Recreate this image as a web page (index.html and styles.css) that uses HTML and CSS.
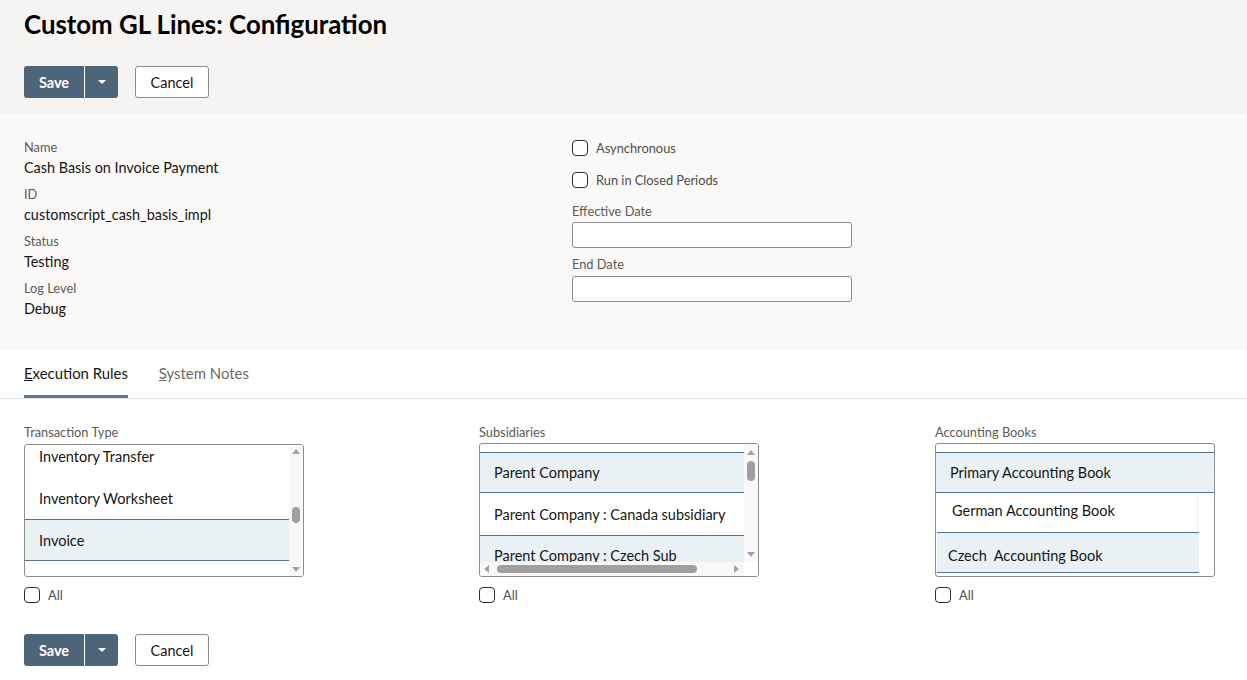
FILE: index.html
```html
<!DOCTYPE html>
<html lang="en">
<head>
    <meta charset="UTF-8">
    <meta name="viewport" content="width=device-width, initial-scale=1.0">
    <title>Custom GL Lines: Configuration</title>
    <link rel="stylesheet" href="styles.css">
</head>
<body>
    <div class="page-header">
        <h1>Custom GL Lines: Configuration</h1>
        <div class="actions">
            <div class="split-button">
                <button class="btn-primary">Save</button>
                <button class="btn-menu"><span class="caret"></span></button>
            </div>
            <button class="btn-secondary">Cancel</button>
        </div>
    </div>

    <div class="main-fields">
        <div class="field-col">
            <div class="field-label">Name</div>
            <div class="field-value">Cash Basis on Invoice Payment</div>
            <div class="field-label">ID</div>
            <div class="field-value">customscript_cash_basis_impl</div>
            <div class="field-label">Status</div>
            <div class="field-value">Testing</div>
            <div class="field-label">Log Level</div>
            <div class="field-value">Debug</div>
        </div>
        <div class="field-col right-col">
            <label class="check-row"><input type="checkbox"> Asynchronous</label>
            <label class="check-row second"><input type="checkbox"> Run in Closed Periods</label>
            <div class="field-label date-label">Effective Date</div>
            <input class="text-input" type="text">
            <div class="field-label date-label">End Date</div>
            <input class="text-input" type="text">
        </div>
    </div>

    <div class="tabs">
        <div class="tab active"><u>E</u>xecution Rules</div>
        <div class="tab"><u>S</u>ystem Notes</div>
    </div>

    <div class="rules">
        <div class="rule-col">
            <div class="field-label">Transaction Type</div>
            <div class="list-box tx-box">
                <div class="list-view">
                    <div class="list-item first-tx">Inventory Transfer</div>
                    <div class="list-item">Inventory Worksheet</div>
                    <div class="list-item selected">Invoice</div>
                    <div class="list-item">Item Fulfillment</div>
                </div>
                <div class="vscroll tx-scroll">
                    <span class="arrow-up"></span>
                    <span class="thumb-v"></span>
                    <span class="spacer"></span>
                    <span class="arrow-down"></span>
                </div>
            </div>
            <label class="check-row all-row"><input type="checkbox"> All</label>
        </div>

        <div class="rule-col">
            <div class="field-label">Subsidiaries</div>
            <div class="list-box sub-box">
                <div class="list-view">
                    <div class="list-item partial">Honeycomb Holding Inc.</div>
                    <div class="list-item selected">Parent Company</div>
                    <div class="list-item">Parent Company : Canada subsidiary</div>
                    <div class="list-item selected">Parent Company : Czech Sub</div>
                </div>
                <div class="vscroll sub-scroll">
                    <span class="arrow-up"></span>
                    <span class="thumb-v"></span>
                    <span class="spacer"></span>
                    <span class="arrow-down"></span>
                </div>
                <div class="hscroll">
                    <span class="arrow-left"></span>
                    <span class="thumb-h"></span>
                    <span class="arrow-right"></span>
                </div>
                <div class="corner"></div>
            </div>
            <label class="check-row all-row"><input type="checkbox"> All</label>
        </div>

        <div class="rule-col">
            <div class="field-label">Accounting Books</div>
            <div class="list-box book-box">
                <div class="list-view">
                    <div class="list-item partial">Secondary Book</div>
                    <div class="list-item selected">Primary Accounting Book</div>
                    <div class="list-item german">German Accounting Book</div>
                    <div class="list-item selected czech">Czech&nbsp; Accounting Book</div>
                </div>
            </div>
            <label class="check-row all-row"><input type="checkbox"> All</label>
        </div>
    </div>

    <div class="actions bottom-actions">
        <div class="split-button">
            <button class="btn-primary">Save</button>
            <button class="btn-menu"><span class="caret"></span></button>
        </div>
        <button class="btn-secondary">Cancel</button>
    </div>
</body>
</html>
```

FILE: styles.css
```css
body {
    margin: 0;
    background-color: #ffffff;
    font-family: Lato, "Liberation Sans", sans-serif;
    color: #161513;
}

.page-header {
    background-color: #f5f4f2;
    padding: 8px 24px 16px;
}

h1 {
    margin: 0;
    font-size: 25.8px;
    line-height: 32px;
    font-weight: 700;
    color: #000000;
}

.actions {
    display: flex;
    align-items: center;
    gap: 17px;
    margin-top: 26px;
}

.split-button {
    display: flex;
    height: 32px;
    border-radius: 3px;
    overflow: hidden;
}

.btn-primary,
.btn-menu {
    border: none;
    background-color: #4c6579;
    color: #ffffff;
    font-family: inherit;
    font-size: 14.5px;
    font-weight: 700;
    height: 32px;
    cursor: pointer;
}

.btn-primary {
    width: 61px;
    padding: 0;
    border-right: 1px solid #ffffff;
}

.btn-menu {
    width: 33px;
    display: flex;
    align-items: center;
    justify-content: center;
}

.caret {
    width: 0;
    height: 0;
    border-left: 4px solid transparent;
    border-right: 4px solid transparent;
    border-top: 4px solid #ffffff;
}

.btn-secondary {
    height: 32px;
    width: 74px;
    padding: 0;
    background-color: #ffffff;
    border: 1px solid #8b8b8b;
    border-radius: 3px;
    font-family: inherit;
    font-size: 14.5px;
    color: #161513;
    cursor: pointer;
}

.main-fields {
    background-color: #faf9f8;
    display: grid;
    grid-template-columns: 548px 1fr;
    padding: 0 24px;
    height: 236px;
}

.field-col {
    display: flex;
    flex-direction: column;
    align-items: flex-start;
    padding-top: 25px;
}

.right-col {
    padding-top: 26px;
}

.field-label {
    font-size: 12.8px;
    line-height: 16px;
    color: #5c5a57;
}

.field-value {
    font-size: 14.4px;
    line-height: 20px;
    margin: 3px 0 8px;
}

.check-row {
    display: flex;
    align-items: center;
    gap: 8px;
    font-size: 12.8px;
    line-height: 16px;
    color: #4f4d4a;
}

.check-row.second {
    margin-top: 16px;
}

.check-row input {
    appearance: none;
    -webkit-appearance: none;
    margin: 0;
    width: 16px;
    height: 16px;
    border: 1px solid #2b2b2b;
    border-radius: 4px;
    background-color: #ffffff;
}

.date-label {
    margin-top: 15px;
}

.date-label + .text-input {
    margin-top: 3px;
}

.text-input {
    width: 280px;
    height: 26px;
    box-sizing: border-box;
    border: 1px solid #8c8c8c;
    border-radius: 3px;
    background-color: #ffffff;
}

.text-input + .date-label {
    margin-top: 8px;
}

.text-input + .date-label + .text-input {
    margin-top: 4px;
}

.tabs {
    display: flex;
    gap: 31px;
    padding: 13px 24px 0;
    border-bottom: 1px solid #e2e2e2;
}

.tab {
    font-size: 14.9px;
    line-height: 20px;
    padding-bottom: 12px;
    border-bottom: 3px solid transparent;
    color: #6b6966;
}

.tab.active {
    color: #161513;
    border-bottom-color: #527a98;
}

.rules {
    display: grid;
    grid-template-columns: 455px 456px 1fr;
    padding: 25px 24px 0;
}

.rule-col .field-label {
    margin-bottom: 3px;
}

.list-box {
    width: 280px;
    height: 134px;
    box-sizing: border-box;
    border: 1px solid #8d8d8d;
    border-radius: 3px;
    background-color: #ffffff;
    overflow: hidden;
    display: grid;
    grid-template-columns: 1fr 14px;
}

.tx-box {
    margin-top: 4px;
    height: 133px;
}

.sub-box {
    grid-template-rows: 1fr 14px;
}

.book-box {
    grid-template-columns: 1fr;
}

.list-view {
    overflow: hidden;
}

.list-item {
    height: 42px;
    box-sizing: border-box;
    display: flex;
    align-items: center;
    padding-left: 14px;
    font-size: 14.5px;
    white-space: nowrap;
}

.list-item.selected {
    background-color: #eaf1f5;
    border-top: 1px solid #4f7391;
    border-bottom: 1px solid #4f7391;
}

.first-tx {
    margin-top: -10px;
}

.partial {
    margin-top: -34px;
}

.sub-box .list-item.selected,
.book-box .list-item.selected {
    height: 41px;
}

.german {
    height: 39px;
    padding-left: 16px;
    padding-bottom: 4px;
    margin-right: 16px;
    border-right: 1px solid #f0f0f0;
}

.czech {
    margin-left: 1px;
    margin-right: 15px;
    padding-left: 11px;
    padding-top: 5px;
}

.vscroll {
    background-color: #f8f8f8;
    display: flex;
    flex-direction: column;
    align-items: center;
    padding: 4px 0;
}

.tx-scroll .thumb-v {
    margin-top: 53px;
    height: 16px;
}

.sub-scroll {
    padding: 6px 0 5px;
}

.sub-scroll .thumb-v {
    margin-top: 6px;
    height: 20px;
}

.spacer {
    flex: 1;
}

.arrow-up,
.arrow-down {
    width: 0;
    height: 0;
    border-left: 4px solid transparent;
    border-right: 4px solid transparent;
}

.arrow-up {
    border-bottom: 5px solid #a3a3a3;
}

.arrow-down {
    border-top: 5px solid #a3a3a3;
}

.thumb-v {
    width: 8px;
    border-radius: 4px;
    background-color: #a0a0a0;
}

.hscroll {
    background-color: #f8f8f8;
    display: flex;
    align-items: center;
    padding: 0 5px 0 4px;
}

.arrow-left,
.arrow-right {
    width: 0;
    height: 0;
    border-top: 4px solid transparent;
    border-bottom: 4px solid transparent;
}

.arrow-left {
    border-right: 5px solid #a3a3a3;
}

.arrow-right {
    border-left: 5px solid #a3a3a3;
    margin-left: auto;
}

.thumb-h {
    width: 200px;
    height: 8px;
    margin-left: 8px;
    border-radius: 4px;
    background-color: #a0a0a0;
}

.corner {
    background-color: #ffffff;
}

.all-row {
    margin-top: 10px;
}

.bottom-actions {
    padding: 0 24px;
    margin-top: 31px;
}
```
